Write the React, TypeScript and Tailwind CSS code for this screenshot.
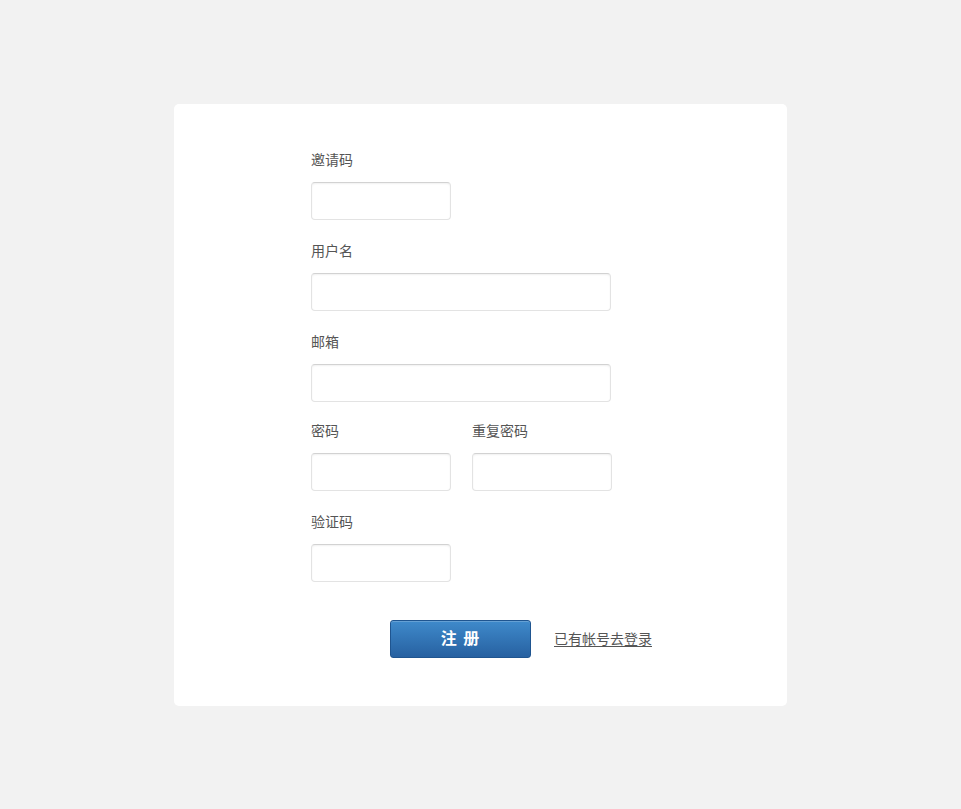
export default function App() {
  const font = { fontFamily: '"Liberation Sans", "Noto Sans CJK SC", sans-serif' }

  return (
    <div className="min-h-[809px] bg-[#f2f2f2] pt-[104px]" style={font}>
      <div className="mx-auto w-[613px] rounded-[5px] bg-white pb-[48px] pl-[137px] pt-[46px]">
        <Field label="邀请码" width="w-[140px]" />
        <Field label="用户名" width="w-[300px]" />
        <Field label="邮箱" width="w-[300px]" gap="mb-[19px]" />

        {/* 密码 / 重复密码 */}
        <div className="flex gap-[21px]">
          <Field label="密码" width="w-[140px]" />
          <Field label="重复密码" width="w-[140px]" />
        </div>

        <Field label="验证码" width="w-[140px]" gap="" />

        <div className="mt-[38px] flex items-center pl-[79px]">
          <button className="h-[38px] w-[141px] rounded-[3px] border border-[#1f5590] bg-gradient-to-b from-[#3f8acb] to-[#2761a1] text-[16px] font-bold tracking-[1px] text-white shadow-[inset_0_1px_0_rgba(255,255,255,0.2)]">
            注 册
          </button>
          <a href="#" className="ml-[23px] text-[14px] leading-5 text-[#555] underline underline-offset-2">
            已有帐号去登录
          </a>
        </div>
      </div>
    </div>
  )
}

function Field({ label, width, gap = "mb-[21px]" }: { label: string; width: string; gap?: string }) {
  return (
    <div className={gap}>
      <p className="text-[14px] leading-5 text-[#555]">{label}</p>
      <input
        className={`mt-[12px] block h-[38px] ${width} rounded-[4px] border border-[#e3e3e3] border-t-[#d2d2d2] bg-white px-2 text-[14px] shadow-[inset_0_1px_2px_rgba(0,0,0,0.06)] outline-none`}
      />
    </div>
  )
}
